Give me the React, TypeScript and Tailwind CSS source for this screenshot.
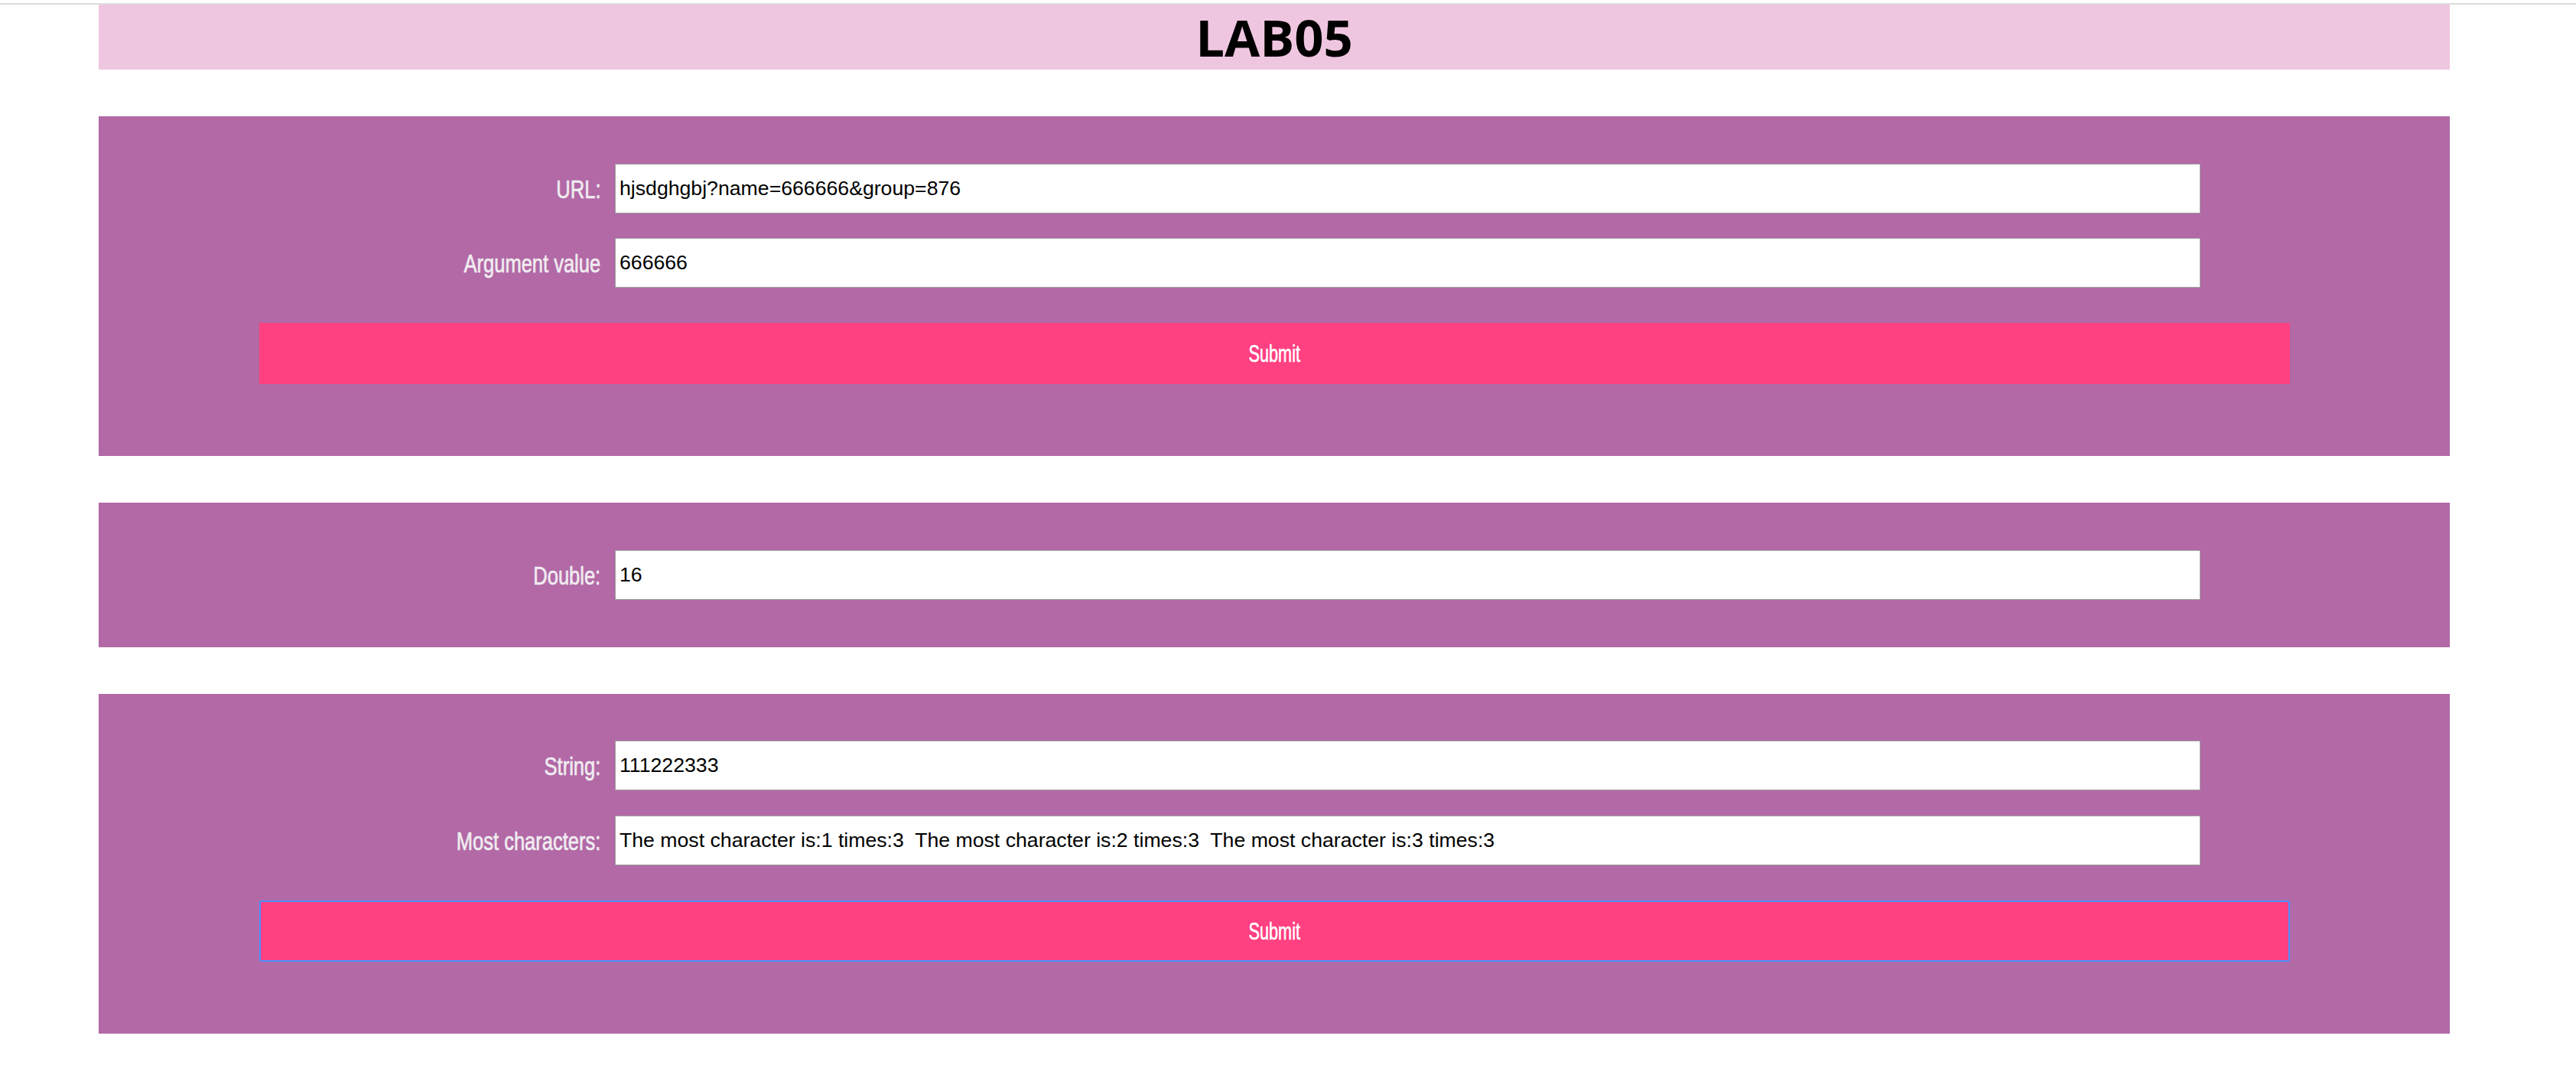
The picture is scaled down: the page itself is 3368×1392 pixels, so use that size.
import React from 'react';

const narrowFont = { fontFamily: '"Liberation Sans", Arial, sans-serif' };

interface FieldRowProps {
  label: string;
  value: string;
}

function FieldRow({ label, value }: FieldRowProps) {
  return (
    <div className="flex items-center">
      <label className="w-[675px] shrink-0 pr-[19px] text-right leading-none">
        {/* condensed look of the original label font */}
        <span
          className="inline-block origin-right scale-x-[0.75] text-[34px] leading-none text-[#f0ecf0] [-webkit-text-stroke:0.7px_#f0ecf0]"
          style={narrowFont}
        >
          {label}
        </span>
      </label>
      <input
        type="text"
        defaultValue={value}
        className="h-[65px] w-[2073px] border border-[#a0a0a0] bg-white px-[5px] text-[26.67px] text-black outline-none font-['Liberation_Sans',Arial,sans-serif]"
      />
    </div>
  );
}

function SubmitButton({ focused }: { focused?: boolean }) {
  return (
    <button
      type="button"
      className={`mx-auto mt-[46px] flex h-[80px] w-[2655px] items-center justify-center bg-[#ff4081] text-white ${
        focused ? 'rounded-[3px] border-2 border-[#4d90fe]' : ''
      }`}
    >
      <span
        className="inline-block scale-x-[0.7] text-[31px] leading-none [-webkit-text-stroke:0.6px_white]"
        style={narrowFont}
      >
        Submit
      </span>
    </button>
  );
}

export default function App() {
  return (
    <div className="min-h-[1392px] w-[3368px] bg-white pt-[4px]">
      <div className="border-t-2 border-[#dcdcdc]">
        <div className="ml-[129px] w-[3074px]">
          {/* header */}
          <div className="flex h-[85px] items-center justify-center bg-[#efc6e0]">
            <h1 className="text-[67px] font-bold leading-none text-black font-['Open_Sans','Noto_Sans',sans-serif]">
              LAB05
            </h1>
          </div>

          {/* URL form */}
          <div className="mt-[61px] bg-[#b269a6] pt-[62px] pb-[94px]">
            <div className="flex flex-col gap-[32px]">
              <FieldRow label="URL:" value="hjsdghgbj?name=666666&group=876" />
              <FieldRow label="Argument value" value="666666" />
            </div>
            <SubmitButton />
          </div>

          {/* Double */}
          <div className="mt-[61px] bg-[#b269a6] py-[62px]">
            <FieldRow label="Double:" value="16" />
          </div>

          {/* String */}
          <div className="mt-[61px] bg-[#b269a6] pt-[61px] pb-[94px]">
            <div className="flex flex-col gap-[33px]">
              <FieldRow label="String:" value="111222333" />
              <FieldRow
                label="Most characters:"
                value="The most character is:1 times:3  The most character is:2 times:3  The most character is:3 times:3"
              />
            </div>
            <SubmitButton focused />
          </div>
        </div>
      </div>
    </div>
  );
}
